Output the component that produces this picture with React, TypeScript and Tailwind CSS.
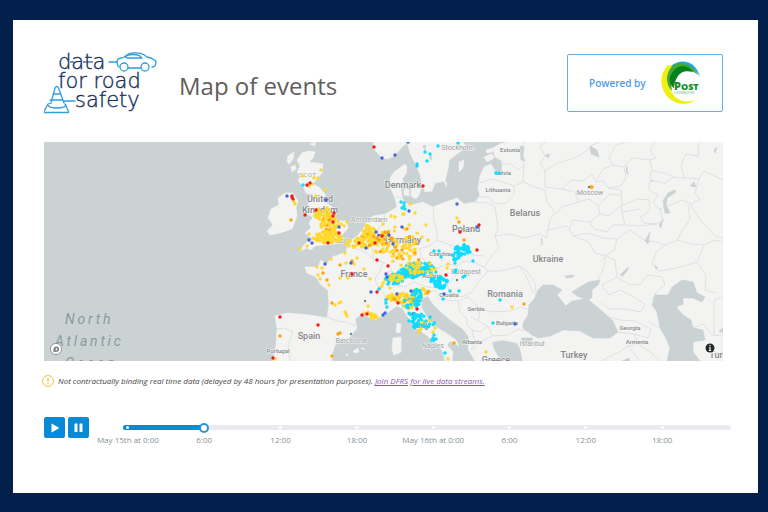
import { useState } from "react";

const COLORS = {
  y: "#ffd92f",
  o: "#ffa40f",
  r: "#f5191c",
  b: "#4365dc",
  c: "#0fdcff",
  k: "#7d8286",
};

type Tone = keyof typeof COLORS;
type Dot = [number, number, Tone];

const points: Record<Tone, string> = {
  y: "321,170 303,176 314,178 318,178 312,184 309,186 325,190 316,196 294,202 295,204 327,208 309,234 300,249 307,246 347,222 391,216 395,217 403,214 395,227 383,224 410,204 415,213 404,214 457,218 426,225 409,225 428,240 414,250 413,237 422,237 447,268 448,264 331,259 317,267 322,268 318,275 320,279 329,285 340,278 348,278 364,269 370,279 345,253 346,263 352,262 354,264 357,258 341,302 339,303 335,305 368,306 345,312 347,316 346,314 368,312 373,316 377,317 364,313 371,315 375,318 380,288 385,280 275,359 433,332 435,328 448,359 486,352 512,307 403,208 382,286 390,288 383,283 420,330 419,332 421,329 408,264 430,264 431,275 341,224 344,226 338,222 335,220",
  o: "291,220 329,220 379,240 388,233 392,238 459,222 464,240 340,265 323,273 327,280 332,303 280,336 340,333 338,334 332,356 352,261 454,343 524,304 591,187 592,187 407,229 385,232 402,250 394,299 395,247 413,299 377,238",
  r: "374,147 310,183 307,185 292,197 293,199 292,196 316,210 305,215 334,213 339,233 328,243 333,216 375,243 359,243 382,236 333,222 423,186 479,225 460,232 477,250 446,275 352,274 280,317 318,325 362,315 367,314 388,266 377,292 273,358 398,303 377,260 417,309",
  b: "382,158 395,155 287,196 326,200 339,227 309,240 312,243 376,232 366,248 393,244 402,227 409,211 389,235 408,142 457,204 477,227 325,264 371,292 386,274 387,277 385,313 383,315 411,291 444,294 515,324 351,263 397,294",
  c: "303,185 401,202 404,203 402,208 404,206 405,209 458,143 438,146 425,152 430,154 427,161 417,164 417,166 496,173 499,173 439,251 434,251 441,257 455,260 455,263 455,272 456,270 463,277 465,276 473,261 470,252 443,299 450,291 459,291 386,300 386,303 387,307 433,338 434,340 432,340 436,339 434,335 445,353 500,300 493,323 386,279 388,284 379,289 409,321 430,317",
  k: "351,334 589,187 365,301 457,280",
};

// cx, cy, rx, ry, amount, tones
const clusters: [number, number, number, number, number, string][] = [
  [323, 214, 9, 6, 30, "yyyyyyy"],
  [329, 226, 9, 10, 66, "yyyyyyyyyyyyo"],
  [328, 237, 15, 6, 78, "yyyyyyyyyyyy"],
  [369, 232, 6, 7, 28, "yyyyyy"],
  [366, 241, 12, 7, 66, "yyyyyyyyyyyo"],
  [355, 244, 10, 4, 12, "yyy"],
  [382, 246, 8, 9, 20, "yyyoyy"],
  [384, 236, 6, 5, 9, "yoyyb"],
  [397, 247, 14, 10, 30, "yyyyyyyo"],
  [405, 256, 15, 11, 28, "yyyyyo"],
  [401, 238, 20, 13, 14, "yyyo"],
  [410, 273, 12, 5, 66, "ccccc"],
  [419, 269, 15, 6, 65, "ccccc"],
  [415, 268, 10, 6, 28, "yyyyc"],
  [432, 268, 7, 6, 12, "cycy"],
  [395, 279, 10, 5, 42, "cccc"],
  [396, 278, 7, 4, 30, "yyyyc"],
  [462, 250, 7, 6, 36, "cccc"],
  [456, 257, 6, 6, 11, "ccc"],
  [441, 283, 7, 6, 38, "cccc"],
  [436, 280, 6, 3, 9, "ccc"],
  [400, 298, 13, 5, 46, "yyyyyyyo"],
  [421, 292, 8, 4, 15, "yyoyc"],
  [417, 297, 5, 8, 38, "cccccy"],
  [410, 304, 8, 5, 24, "ccycyy"],
  [411, 315, 5, 4, 10, "yyck"],
  [419, 321, 7, 9, 24, "cccccy"],
  [427, 323, 9, 5, 13, "cccy"],
  [372, 316, 5, 3, 8, "yy"],
];

function buildDots(): Dot[] {
  const dots: Dot[] = [];
  let seed = 4217;
  const next = () => {
    seed = (seed * 16807) % 2147483647;
    return seed / 2147483647;
  };
  for (const [cx, cy, rx, ry, amount, tones] of clusters) {
    for (let i = 0; i < amount; i++) {
      const angle = next() * Math.PI * 2;
      const reach = Math.sqrt(next());
      const tone = tones[Math.floor(next() * tones.length)] as Tone;
      dots.push([cx + Math.cos(angle) * reach * rx, cy + Math.sin(angle) * reach * ry, tone]);
    }
  }
  for (const tone of ["y", "c", "o", "b", "r", "k"] as Tone[]) {
    for (const pair of points[tone].split(" ")) {
      const [x, y] = pair.split(",").map(Number);
      dots.push([x, y, tone]);
    }
  }
  return dots;
}

const dots = buildDots();

const land = [
  // Great Britain
  "M302 153L308 151 315 152 313 158 309 162 316 163 323 164 322 173 317 179 313 184 319 187 325 194 327 203 332 207 335 216 338 221 347 221 348 228 342 235 344 240 335 244 323 245 315 246 311 250 307 248 300 251 304 245 308 241 318 238 310 237 305 233 311 228 309 223 313 217 307 214 310 208 308 203 312 194 306 193 303 186 298 181 301 175 297 172 300 166 297 160Z",
  // Ireland
  "M278 198L285 193 293 193 298 201 296 208 297 216 292 229 280 233 270 235 267 231 273 225 268 218 271 209 279 205Z",
  "M288 156L294 152 293 159 289 164 287 161ZM291 167L295 165 296 169 292 172ZM310 144L315 142 315 146Z",
  // Norway
  "M373 142L374 149 382 158 388 159 395 155 402 147 409 142Z",
  // Sweden
  "M407 142L410 153 415 163 420 174 422 184 425 192 432 191 435 183 445 181 448 169 449 160 457 154 466 147 463 142ZM459 162L464 160 463 168 459 172Z",
  // Danish islands
  "M411 189L417 186 421 189 419 195 416 199 411 196ZM404 189L409 190 409 196 404 195ZM444 180L447 183 446 187Z",
  // Estonian islands
  "M486 150L493 148 493 152 487 153ZM484 157L492 154 494 158 487 162Z",
  // Continental Europe
  "M405 164L407 167 406 174 402 179 404 184 401 189 402 197 405 203 412 205 423 202 433 207 443 203 457 198 464 204 475 202 480 196 478 188 480 176 484 167 491 164 496 173 502 173 502 161 495 157 493 148 500 144 508 142H723V361H523L520 348 517 343 503 340 492 342 494 350 501 361H475L468 349 469 337 463 329 452 321 442 313 433 304 428 296 421 299 422 309 428 319 436 327 446 333 456 340 459 346 450 341 447 345 453 352 452 361H445L443 352 437 344 430 338 418 329 408 317 402 308 397 306 385 314 375 320 362 314 355 319 357 328 350 337 335 345 332 355 332 361H273L276 345 277 328 275 316 287 313 310 315 327 318 329 304 328 290 321 285 316 277 307 273 305 267 318 267 321 260 326 265 332 257 346 252 348 243 357 236 363 229 368 220 373 216 385 214 391 211 397 207 395 198 391 189 390 178 394 172Z",
  // Mediterranean islands
  "M397 323L401 324 400 333 396 332ZM393 338L401 337 401 352 394 355 392 350ZM353 351L358 348 359 352 355 353ZM346 354L348 354 347 356ZM361 348L364 348 364 350Z",
];

const water = [
  // Black Sea and Sea of Azov
  "M543 285L553 285 562 290 557 295 566 306 572 301 585 299 577 296 572 292 580 287 588 282 600 280 598 285 592 290 592 297 589 300 603 312 613 321 618 332 610 338 593 338 580 331 563 330 550 336 538 338 532 335 523 328 523 323 528 315 529 305 535 298 538 290Z",
  // Caspian Sea
  "M655 295L668 295 672 287 682 280 693 282 697 293 705 297 702 302 693 298 683 298 683 304 676 307 683 315 691 320 693 328 703 330 705 340 693 342 693 352 700 361H667L670 348 667 340 660 328 657 312 652 305Z",
  "M521 338L533 338 531 342 523 343Z",
  // Lakes and reservoirs
  "M520 146L524 147 523 156 525 161 521 160ZM545 155L550 154 548 158ZM590 146L597 150 599 157 591 154ZM714 150L717 147 715 153ZM565 276L574 275 573 277 566 278ZM627 268L629 268 623 276 620 275ZM663 201L668 193 675 190 676 192 667 198 666 205 670 213 665 213ZM659 225L663 219 661 228ZM645 241L650 232 648 244ZM627 166L628 175 626 171ZM690 186L694 182 696 187ZM541 238L542 238 542 245ZM655 265L658 268 656 269ZM651 180L653 181 652 182ZM719 331L723 328 723 333ZM622 361L629 358 630 361ZM441 260L443 260 442 261Z",
  "M429 157L432 155 431 160ZM423 146L426 145 425 150Z",
];

const borders =
  "M277 329L285 328 293 332 288 345 290 361M327 317L337 321 347 322 356 326M348 243L357 249 367 253 374 260 383 262 380 271 375 279 378 287 385 295 384 304 388 313M383 262L390 266 392 271 384 273M357 237L366 239 372 247 374 260M372 247L377 238 379 227 384 224 385 214M396 197L402 198M433 207L434 220 437 232 437 240 429 246 419 249 422 257 429 265 437 268 448 264 457 266 463 261 473 262 484 267M437 240L451 245 462 250 473 255 484 256M429 265L420 277 405 279 392 271M384 284L395 285 405 287 413 282 427 287 437 288 447 285 456 275 460 269M420 288L430 292 437 290M447 285L450 292 462 297 472 292 480 280 488 271 484 267 493 254 499 248 495 236 498 228 495 207 488 203 475 202M437 293L445 300 458 301 460 312 467 319 467 325M458 301L468 297 480 309 478 321 488 326 480 332 472 330 467 325M480 309L493 312 509 311 521 307 530 310M488 326L492 336 508 335 518 329 527 331M472 330L475 342 471 350M478 321L471 317M492 336L480 342 473 350M488 271L500 271 512 268 519 266 526 276 532 290 538 298M519 266L526 270 535 283 536 292M480 197L490 197 493 203 498 204M480 183L492 179 503 182 514 186 514 195 506 203 498 204M502 164L510 164 519 170 524 165M514 186L523 182 535 187M524 142L521 150 524 165 523 182M495 236L510 234 525 238 540 234 546 238 548 230 567 226 573 236 589 242 595 253 606 256 603 270 597 282M535 187L545 190 547 202 555 212 550 220 548 230M541 162L545 156 540 146 546 142M545 171L557 163 575 158 585 152 592 145 600 142M540 162L545 171 545 187 562 189 571 180 583 181 592 174 596 182 603 181 608 188 621 186 626 178 624 167 613 165 603 169 596 182M613 165L609 158 615 146 625 142M624 167L632 158 650 160 656 158 650 150 655 142M650 160L652 171 665 173 674 177 665 183 650 180 649 190 658 195 653 203 660 209M650 180L651 172M674 177L684 178 681 165 686 154 698 156 699 142M684 178L699 179 704 171 723 180M699 179L695 193 700 199 692 204 682 200 672 204 660 209 663 220 657 224 644 223 640 217 650 210 649 200 637 199 622 206 621 190 608 188M562 189L575 192 578 202 562 207 556 214M578 202L590 199 598 206 600 214 590 222 572 220 570 230M598 206L610 194 621 195M600 214L608 216 621 206M621 206L622 212 640 209M622 212L625 225 640 226 657 224M590 222L594 229 607 232 612 225 625 225M573 236L588 233 603 238 617 239 630 230 644 240 656 242 665 245 677 240 681 233 690 219 688 204M617 239L614 250 606 256 601 261M677 240L692 244 704 245 715 240 723 242M690 204L701 221 715 236 723 238M606 256L615 260 617 277 602 285 M617 277L630 285 641 284 647 275 662 277 665 285 658 290 651 300M665 245L656 252 652 265 660 271 680 267 697 262 704 246M697 262L706 275 705 290 717 293M601 285L609 295 620 290 632 296 645 304 641 312 626 309 610 309 601 303M608 317L620 320 635 321 651 329 648 338 634 334 618 332M634 334L638 344 650 352 660 361M638 344L628 346 640 361M601 361L619 352 628 346M714 335L714 300 723 297M648 321L660 328M693 328L703 324 712 335 723 336";

type Label = [string, number, number, number, boolean?];
const labels: Label[] = [
  ["United", 320, 202, 9],
  ["Kingdom", 320, 213, 9],
  ["Denmark", 403, 188, 9],
  ["Belarus", 525, 216, 9],
  ["Poland", 466, 232, 9],
  ["Germany", 403, 243, 9],
  ["Ukraine", 548, 262, 9],
  ["France", 354, 277, 9],
  ["Spain", 309, 339, 9],
  ["Romania", 505, 297, 9],
  ["Italy", 421, 328, 9],
  ["Greece", 496, 363, 9],
  ["Turkey", 574, 358, 9],
  ["Turkmenistan", 737, 358, 9],
  ["Estonia", 510, 152, 6],
  ["Latvia", 503, 175, 6],
  ["Lithuania", 498, 192, 6],
  ["Czechia", 440, 256, 6],
  ["Austria", 432, 278, 6],
  ["Croatia", 449, 297, 6],
  ["Serbia", 476, 311, 6],
  ["Bulgaria", 507, 325, 6],
  ["Albania", 472, 344, 6],
  ["Portugal", 278, 353, 6],
  ["Georgia", 630, 330, 6],
  ["Armenia", 637, 344, 6],
  ["Stockholm", 458, 150, 7, true],
  ["Amsterdam", 369, 222, 7, true],
  ["Moscow", 590, 195, 7, true],
  ["Barcelona", 351, 343, 7, true],
  ["Budapest", 466, 274, 7, true],
  ["Naples", 433, 348, 7, true],
  ["Istanbul", 532, 346, 7, true],
  ["London", 337, 243, 7, true],
];

function EventMap() {
  return (
    <div className="relative mt-[30px] overflow-hidden bg-[#cad2d3]">
      <svg viewBox="44 142 679 219" className="block w-full" role="img" aria-label="Road safety events in Europe">
        <g fill="#f3f3f2" stroke="#f3f3f2" strokeWidth="0.6" strokeLinejoin="round">
          {land.map((d) => (
            <path key={d} d={d} />
          ))}
        </g>
        <path d={borders} fill="none" stroke="#dcdfdf" strokeWidth="0.9" strokeLinejoin="round" />
        <g fill="#cad2d3" stroke="#cad2d3" strokeWidth="0.6" strokeLinejoin="round">
          {water.map((d) => (
            <path key={d} d={d} />
          ))}
        </g>
        <g className="font-['Roboto',sans-serif] italic tracking-[0.2em]" fontSize="14" fill="#8c999e">
          <text x="65" y="324">North</text>
          <text x="55" y="346">Atlantic</text>
          <text x="65" y="368">Ocean</text>
        </g>
        <g className="font-['Roboto',sans-serif]" textAnchor="middle" stroke="#f5f5f4" strokeWidth="1.2" strokeLinejoin="round" paintOrder="stroke">
          <text x="308" y="177" fontSize="6" fill="#a4a8ab" className="tracking-widest">SCOT</text>
          {labels.map(([name, x, y, size, city]) => (
            <text key={name} x={x} y={y} fontSize={size} fill={city ? "#a0a3a6" : "#85888b"} fontWeight={city ? 400 : 500}>
              {name}
            </text>
          ))}
        </g>
        {dots.map(([x, y, tone], i) => (
          <circle key={i} cx={x} cy={y} r={tone === "k" ? 1.2 : 1.7} fill={COLORS[tone]} />
        ))}
        <circle cx="56" cy="349" r="5.6" fill="#fff" stroke="#8b9092" strokeWidth="0.9" />
        <path d="M53.4 351.6c-.5-3 .8-5 3-5a2.6 2.6 0 0 1 0 5.2c-1 .2-2 .1-3-.2Z" fill="#777c7f" />
        <path d="m56.4 347.6.5 1.1 1.1.5-1.1.5-.5 1.1-.5-1.1-1.1-.5 1.1-.5Z" fill="#fff" />
      </svg>
      <button type="button" aria-label="Map attribution" className="absolute right-[7px] bottom-[7px] size-3 rounded-full bg-white/60">
        <svg viewBox="0 0 12 12" className="size-3">
          <circle cx="6" cy="6" r="4.5" fill="#25282a" />
          <path d="M6 3.1v1.2M5.2 5.5H6v3M4.9 8.5h2.2" stroke="#fff" strokeWidth="1.1" fill="none" />
        </svg>
      </button>
    </div>
  );
}

function Logo() {
  return (
    <svg viewBox="2 2 116 64" className="h-16 w-[116px] shrink-0" role="img" aria-label="Data for Road Safety">
      <g className="font-['DejaVu_Sans',sans-serif]" fontSize="21" fontWeight="200" fill="#17325f" stroke="#17325f" strokeWidth="0.4">
        <text x="16" y="20">data</text>
        <text x="16" y="39">for road</text>
        <text x="33" y="58">safety</text>
      </g>
      <path d="M28 13h4M41 13h10" stroke="#17325f" strokeWidth="1.2" />
      <g fill="none" stroke="#2f9fe0" strokeWidth="1.3" strokeLinejoin="round" strokeLinecap="round">
        <path d="M67 13h8M77 18c-2-1-2.500-6-1-8 2-1 4-1 6-2 3-2 4-4 8-4 7-.5 11 0 15 4 4 1 8 2 9 5 0 3-1 5-4 5M86 19h13" />
        <path d="M83 8c2-2 4-2.500 8-2.500s7 .5 9 3.500L85 9Z" />
        <circle cx="82" cy="18" r="4" />
        <circle cx="103" cy="18" r="4" />
        <path d="M8 54 12 39q1.500-3 3.500 0L21 54M10 45h8M7 51h12M21 52h11M8 54l-3 1-4 7.500q0 1 1 1h23q1 0 .5-1L22 55M5 56c1 4 17 4 18 0" transform="translate(1 0)" />
      </g>
    </svg>
  );
}

function PostLogo() {
  return (
    <svg viewBox="0 0 42 46" className="h-[46px] w-[42px]" role="img" aria-label="Post Luxembourg">
      <path d="M8 5C0 13-1 25 6 35c7 9 19 12 29 5-10 3-19 1-24-9C6 21 8 12 13 6Z" fill="#f0ee12" />
      <path d="M11 6C20-2 36 0 40 17 35 7 26 3 14 9Z" fill="#1fa7d8" />
      <path d="M7 18C8 8 15 1 24 4c7 1 11 5 14 11-7-6-16-7-22-1-5 5-5 10-4 17C8 27 7 22 7 18Z" fill="#41a936" />
      <path d="M10 17C15 4 27 3 33 12c-8-2-12 0-15 4-3 4-4 9-4 12-4-3-5-7-4-11Z" fill="#05831d" />
      <text x="14" y="30" fontSize="11" fontWeight="800" fill="#158d2d" className="font-['Open_Sans',sans-serif]">
        P<tspan fontSize="9">OST</tspan>
      </text>
      <text x="14" y="34" fontSize="3" fill="#62b46f" className="font-['Open_Sans',sans-serif]">LUXEMBOURG</text>
    </svg>
  );
}

const hours = ["May 15th at 0:00", "6:00", "12:00", "18:00", "May 16th at 0:00", "6:00", "12:00", "18:00"];
const LAST_HOUR = 47;

function Timeline() {
  const [hour, setHour] = useState(6);
  const [playing, setPlaying] = useState(false);
  return (
    <div className="mt-[29px] -mr-2 flex items-start gap-[34px]">
      <div className="flex shrink-0 gap-[3px]">
        <button type="button" aria-label="Play" aria-pressed={playing} onClick={() => setPlaying(true)} className="grid size-[21px] place-items-center rounded-xs bg-[#078bd6]">
          <svg viewBox="0 0 21 21" className="size-[21px]" fill="#fff">
            <path d="M7.500 7v8q0 .6.6.3l6.500-3.900q.5-.4 0-.8L8.100 6.700q-.6-.3-.6.3Z" />
          </svg>
        </button>
        <button type="button" aria-label="Pause" aria-pressed={!playing} onClick={() => setPlaying(false)} className="grid size-[21px] place-items-center rounded-xs bg-[#078bd6]">
          <svg viewBox="0 0 21 21" className="size-[21px]" fill="#fff">
            <rect x="6.500" y="6.500" width="3" height="8.500" rx=".5" />
            <rect x="11.500" y="6.500" width="3" height="8.500" rx=".5" />
          </svg>
        </button>
      </div>
      <div className="relative min-w-0 flex-1 rounded-full px-[5px]">
        <div className="absolute inset-x-0 top-2 h-[5px] rounded-full bg-[#e9ebee]" />
        <div className="absolute top-2 left-0 h-[5px] rounded-full bg-[#078bd6]" style={{ width: `${((hour + 0.4) / (LAST_HOUR + 0.8)) * 100}%` }} />
        <ul className="relative -ml-[6.4%] grid w-[102.1%] grid-cols-8 text-center text-[8px] leading-3 whitespace-nowrap text-[#84929a]">
          {hours.map((label, i) => (
            <li key={i} className="flex flex-col items-center gap-[5px] pt-[9px]">
              <span className="size-[3px] rounded-full bg-white" />
              {label}
            </li>
          ))}
        </ul>
        <input
          type="range"
          aria-label="Time of day"
          min={0}
          max={LAST_HOUR}
          value={hour}
          onChange={(e) => setHour(Number(e.target.value))}
          className="absolute inset-x-0 top-[5px] h-[11px] w-full cursor-pointer appearance-none bg-transparent [&::-webkit-slider-thumb]:size-[10px] [&::-webkit-slider-thumb]:appearance-none [&::-webkit-slider-thumb]:rounded-full [&::-webkit-slider-thumb]:border-2 [&::-webkit-slider-thumb]:border-solid [&::-webkit-slider-thumb]:border-[#2792e4] [&::-webkit-slider-thumb]:bg-white"
        />
      </div>
    </div>
  );
}

export default function App() {
  return (
    <div className="flex min-h-screen bg-[#02204b] pt-5 pr-[10px] pb-[19px] pl-[13px] font-['Open_Sans',sans-serif]">
      <main className="min-w-0 flex-1 bg-white pt-[34px] pr-[35px] pb-8 pl-[31px]">
        <header className="flex h-[58px] items-center">
          <Logo />
          <h1 className="ml-[19px] pt-[6px] text-[24px] leading-8 text-[#625d5c]">Map of events</h1>
          <div className="ml-auto flex h-[58px] w-[156px] items-center justify-between rounded-xs border border-[#62aeea] pr-[20px] pl-[21px]">
            <span className="text-[10px] font-semibold whitespace-nowrap text-[#509ce4]">Powered by</span>
            <PostLogo />
          </div>
        </header>
        <EventMap />
        <p className="-ml-0.5 mt-[13px] flex items-center gap-1 text-[8px] leading-[14px] text-[#444] italic">
          <svg viewBox="0 0 12 12" className="size-3 shrink-0" fill="none" stroke="#f5bd3d">
            <circle cx="6" cy="6" r="5.400" />
            <path d="M6 3v4M6 8v1.200" strokeWidth="1.200" />
          </svg>
          <span>
            Not contractually binding real time data (delayed by 48 hours for presentation purposes).{" "}
            <a href="#join" className="text-[#8a55b5] underline">Join DFRS for live data streams.</a>
          </span>
        </p>
        <Timeline />
      </main>
    </div>
  );
}
